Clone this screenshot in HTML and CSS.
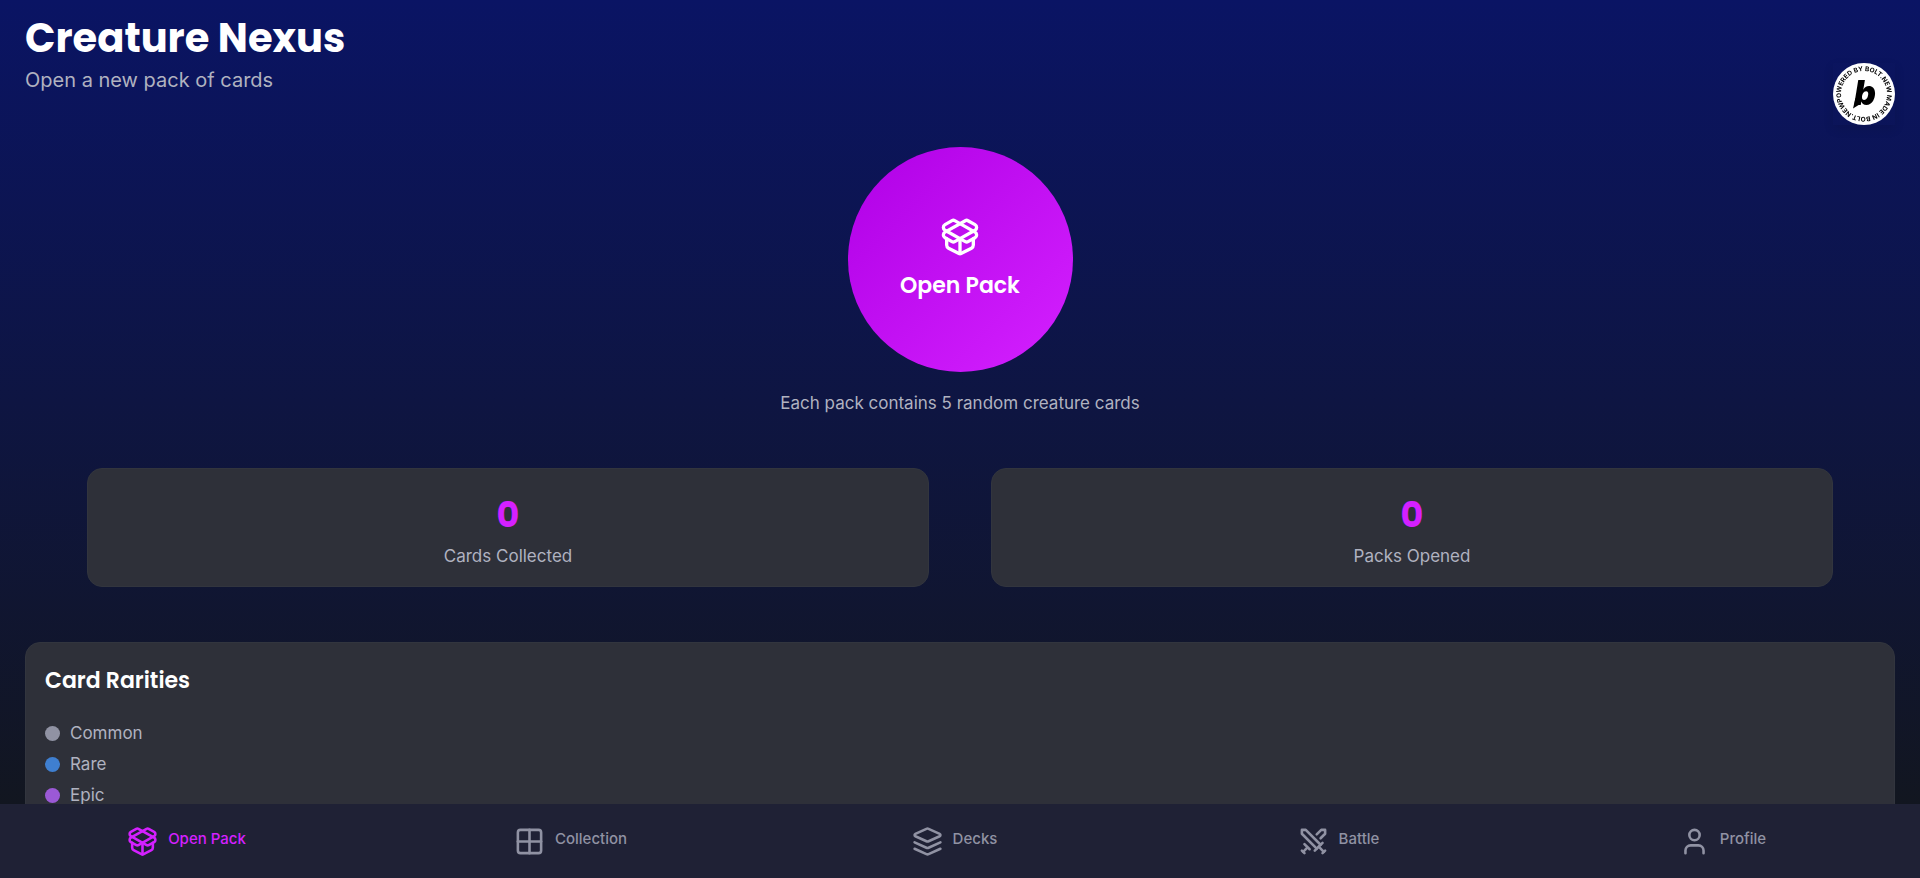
FILE: index.html
```
<!DOCTYPE html>
<html lang="en">
<head>
    <meta charset="UTF-8">
    <meta name="viewport" content="width=device-width, initial-scale=1.0">
    <title>Creature Nexus</title>
    <link rel="stylesheet" href="styles.css">
</head>
<body>
    <main class="screen">
        <header class="header">
            <h1>Creature Nexus</h1>
            <p>Open a new pack of cards</p>
        </header>

        <section class="pack">
            <button type="button" class="pack-button">
                <svg class="icon" viewBox="0 0 24 24">
                    <path d="M12 22v-9"/>
                    <path d="M15.17 2.21a1.67 1.67 0 0 1 1.63 0L21 4.57a1.93 1.93 0 0 1 0 3.36L8.82 14.79a1.655 1.655 0 0 1-1.64 0L3 12.43a1.93 1.93 0 0 1 0-3.36z"/>
                    <path d="M20 13v3.87a2.06 2.06 0 0 1-1.11 1.83l-6 3.08a1.93 1.93 0 0 1-1.78 0l-6-3.08A2.06 2.06 0 0 1 4 16.87V13"/>
                    <path d="M21 12.43a1.93 1.93 0 0 0 0-3.36L8.83 2.2a1.64 1.64 0 0 0-1.63 0L3 4.57a1.93 1.93 0 0 0 0 3.36l12.18 6.86a1.636 1.636 0 0 0 1.63 0z"/>
                </svg>
                <span>Open Pack</span>
            </button>
            <p class="pack-info">Each pack contains 5 random creature cards</p>
        </section>

        <section class="stats">
            <div class="stat-card">
                <span class="stat-value">0</span>
                <span class="stat-label">Cards Collected</span>
            </div>
            <div class="stat-card">
                <span class="stat-value">0</span>
                <span class="stat-label">Packs Opened</span>
            </div>
        </section>

        <section class="rarities">
            <h2>Card Rarities</h2>
            <ul>
                <li><span class="dot common"></span>Common</li>
                <li><span class="dot rare"></span>Rare</li>
                <li><span class="dot epic"></span>Epic</li>
            </ul>
        </section>
    </main>

    <nav class="tabs">
        <a href="#open" class="tab active">
            <svg class="icon" viewBox="0 0 24 24">
                <path d="M12 22v-9"/>
                <path d="M15.17 2.21a1.67 1.67 0 0 1 1.63 0L21 4.57a1.93 1.93 0 0 1 0 3.36L8.82 14.79a1.655 1.655 0 0 1-1.64 0L3 12.43a1.93 1.93 0 0 1 0-3.36z"/>
                <path d="M20 13v3.87a2.06 2.06 0 0 1-1.11 1.83l-6 3.08a1.93 1.93 0 0 1-1.78 0l-6-3.08A2.06 2.06 0 0 1 4 16.87V13"/>
                <path d="M21 12.43a1.93 1.93 0 0 0 0-3.36L8.83 2.2a1.64 1.64 0 0 0-1.63 0L3 4.57a1.93 1.93 0 0 0 0 3.36l12.18 6.86a1.636 1.636 0 0 0 1.63 0z"/>
            </svg>
            <span>Open Pack</span>
        </a>
        <a href="#collection" class="tab">
            <svg class="icon" viewBox="0 0 24 24">
                <rect x="3" y="3" width="18" height="18" rx="2"/>
                <path d="M3 12h18"/>
                <path d="M12 3v18"/>
            </svg>
            <span>Collection</span>
        </a>
        <a href="#decks" class="tab">
            <svg class="icon" viewBox="0 0 24 24">
                <path d="m12.83 2.18a2 2 0 0 0-1.66 0L2.6 6.08a1 1 0 0 0 0 1.83l8.58 3.91a2 2 0 0 0 1.66 0l8.58-3.9a1 1 0 0 0 0-1.83Z"/>
                <path d="m22 17.65-9.17 4.16a2 2 0 0 1-1.66 0L2 17.65"/>
                <path d="m22 12.65-9.17 4.16a2 2 0 0 1-1.66 0L2 12.65"/>
            </svg>
            <span>Decks</span>
        </a>
        <a href="#battle" class="tab">
            <svg class="icon" viewBox="0 0 24 24">
                <path d="M14.5 17.5 3 6V3h3l11.5 11.5"/>
                <path d="m13 19 6-6"/>
                <path d="m16 16 4 4"/>
                <path d="m19 21 2-2"/>
                <path d="M14.5 6.5 18 3h3v3l-3.5 3.5"/>
                <path d="m5 14 4 4"/>
                <path d="m7 17-3 3"/>
                <path d="m3 19 2 2"/>
            </svg>
            <span>Battle</span>
        </a>
        <a href="#profile" class="tab">
            <svg class="icon" viewBox="0 0 24 24">
                <path d="M19 21v-2a4 4 0 0 0-4-4H9a4 4 0 0 0-4 4v2"/>
                <circle cx="12" cy="7" r="4"/>
            </svg>
            <span>Profile</span>
        </a>
    </nav>

    <a href="#bolt" class="bolt-badge" aria-label="Bolt">
        <svg viewBox="0 0 124 124">
            <defs>
                <path id="ring" d="M62 108a46 46 0 0 1 0-92a46 46 0 0 1 0 92a46 46 0 0 1 0-92"/>
            </defs>
            <circle cx="62" cy="62" r="62" fill="#fff"/>
            <text class="ring-text"><textPath href="#ring" startOffset="56">POWERED BY BOLT.NEW MADE IN BOLT.NEW</textPath></text>
            <text class="mark" x="64" y="83" text-anchor="middle">b</text>
            <path d="M45 70l11 11-16 10z" fill="#000"/>
        </svg>
    </a>
</body>
</html>
```
FILE: styles.css
```
* {
    box-sizing: border-box;
}

body {
    margin: 0;
    height: 100vh;
    display: flex;
    flex-direction: column;
    font-family: Inter, "Liberation Sans", sans-serif;
    color: #b0b2c0;
    background: #121620;
}

h1, h2, p, ul {
    margin: 0;
    padding: 0;
}

h1, h2 {
    font-family: Poppins, Inter, sans-serif;
    color: #ffffff;
}

.icon {
    fill: none;
    stroke: currentColor;
    stroke-width: 2;
    stroke-linecap: round;
    stroke-linejoin: round;
    flex-shrink: 0;
}

.screen {
    flex: 1;
    min-height: 0;
    overflow-y: auto;
    scrollbar-width: none;
    padding: 14px 25px 25px;
    background: linear-gradient(#0a1464, #121620);
}

.header h1 {
    font-size: 40px;
    line-height: 48px;
    font-weight: 700;
}

.header p {
    margin-top: 2px;
    font-size: 20px;
    line-height: 32px;
}

/* Pack opener */
.pack {
    display: flex;
    flex-direction: column;
    align-items: center;
    gap: 16px;
    padding-top: 51px;
}

.pack-button {
    width: 225px;
    height: 225px;
    border: none;
    border-radius: 50%;
    display: flex;
    flex-direction: column;
    align-items: center;
    justify-content: center;
    gap: 12px;
    font-family: Poppins, Inter, sans-serif;
    font-size: 22px;
    line-height: 34px;
    font-weight: 600;
    color: #ffffff;
    background: linear-gradient(135deg, #b000e6, #d420ff);
    cursor: pointer;
}

.pack-button .icon {
    width: 40px;
    height: 40px;
}

.pack-info {
    font-size: 17px;
    line-height: 30px;
}

/* Stats */
.stats {
    display: grid;
    grid-template-columns: 1fr 1fr;
    gap: 62px;
    padding: 50px 62px 55px;
}

.stat-card {
    display: flex;
    flex-direction: column;
    align-items: center;
    padding: 20px 20px 15px;
    border: 1px solid #32353e;
    border-radius: 15px;
    background: #2e3039;
}

.stat-value {
    font-family: Poppins, Inter, sans-serif;
    font-size: 35px;
    line-height: 52px;
    font-weight: 700;
    color: #d420ff;
}

.stat-label {
    font-size: 17px;
    line-height: 30px;
}

/* Rarities */
.rarities {
    padding: 19px;
    border: 1px solid #32353e;
    border-radius: 15px;
    background: #2e3039;
}

.rarities h2 {
    font-size: 22px;
    line-height: 38px;
    font-weight: 600;
    margin-bottom: 18px;
}

.rarities ul {
    list-style: none;
}

.rarities li {
    display: flex;
    align-items: center;
    gap: 10px;
    font-size: 17px;
    line-height: 31px;
}

.dot {
    width: 15px;
    height: 15px;
    border-radius: 50%;
}

.common {
    background: #9092a3;
}

.rare {
    background: #3f7fd0;
}

.epic {
    background: #9b59d6;
}

/* Bottom tabs */
.tabs {
    display: grid;
    grid-template-columns: repeat(5, 1fr);
    height: 74px;
    background: #1f2135;
}

.tab {
    display: flex;
    align-items: center;
    justify-content: center;
    gap: 10px;
    padding-right: 11px;
    font-size: 15px;
    font-weight: 500;
    color: #9092a3;
    text-decoration: none;
}

.tab .icon {
    width: 31px;
    height: 31px;
}

.tab span {
    padding-bottom: 5px;
}

.tab.active {
    color: #d420ff;
}

/* Badge floats over the page */
.bolt-badge {
    position: fixed;
    top: 63px;
    right: 25px;
    width: 62px;
    height: 62px;
    box-shadow: 0 4px 10px rgba(0, 0, 0, 0.1);
}

.bolt-badge svg {
    display: block;
}

.ring-text {
    font-size: 13px;
    font-weight: 700;
}

.mark {
    font-size: 68px;
    font-weight: 900;
    font-style: italic;
}
```
